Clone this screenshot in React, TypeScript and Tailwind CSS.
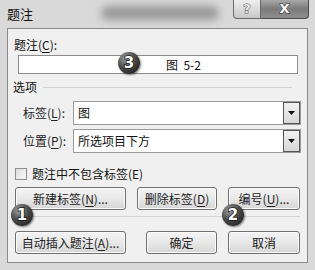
import React from 'react';

const font = { fontFamily: '"Noto Sans CJK SC", "Noto Sans", sans-serif' };

function Badge({ n }: { n: string }) {
  return (
    <div className="w-[22px] h-[22px] rounded-full flex items-center justify-center bg-[radial-gradient(circle_at_35%_30%,#a0a0a0_0%,#4a4a4a_45%,#111_100%)] shadow-[1px_1px_2px_rgba(0,0,0,0.5)]">
      <span
        className="text-[15px] font-black leading-none text-white [-webkit-text-stroke:1.5px_#111] [paint-order:stroke_fill]"
        style={{ fontFamily: '"DejaVu Sans", sans-serif' }}
      >
        {n}
      </span>
    </div>
  );
}

function Button({ label, u, rest, w, ml }: { label: string; u?: string; rest?: string; w: string; ml: string }) {
  return (
    <div
      className={`${w} ${ml} h-[23px] rounded-[3px] border border-[#707070] bg-gradient-to-b from-[#f4f4f4] via-[#e8e8e8] to-[#d6d6d6] shadow-[inset_0_0_0_1px_#fbfbfb] flex items-center justify-center text-[12px] text-[#222]`}
    >
      {label}
      {u && (
        <>
          (<span className="underline underline-offset-2">{u}</span>){rest}
        </>
      )}
    </div>
  );
}

function Combo({ value }: { value: string }) {
  return (
    <div className="ml-[5px] w-[228px] h-[24px] border border-[#9a9a9a] bg-white flex items-center">
      <span className="flex-1 pl-[4px] text-[12px] text-[#111]">{value}</span>
      <div className="w-[17px] h-[22px] border border-[#555] bg-gradient-to-b from-[#f2f2f2] to-[#d8d8d8] flex items-center justify-center">
        <svg width="7" height="4" viewBox="0 0 7 4">
          <path d="M0 0h7L3.5 4z" fill="#111" />
        </svg>
      </div>
    </div>
  );
}

export default function App() {
  return (
    <div className="w-[315px] h-[270px] bg-[#d9d9d9] overflow-hidden" style={font}>
      {/* title bar */}
      <div className="h-[28px] flex items-start">
        <span className="mt-[6px] ml-[7px] text-[13px] text-[#111] leading-[16px]">题注</span>
        <div className="mt-[6px] ml-[68px] w-[118px] h-[14px] bg-[#6e6e6e] blur-[4px] opacity-60 rounded-full" />
        <div className="ml-auto flex">
          <div className="w-[28px] h-[19px] rounded-bl-[4px] border border-t-0 border-[#6a6a6a] bg-gradient-to-b from-[#eeeeee] to-[#c8c8c8] flex items-center justify-center text-[13px] font-bold text-[#e8e8e8] [-webkit-text-stroke:1px_#555] [paint-order:stroke_fill]" style={{ fontFamily: '"DejaVu Sans", sans-serif' }}>
            ?
          </div>
          <div className="w-[48px] h-[19px] rounded-br-[4px] border border-t-0 border-l-0 border-[#4a4a4a] bg-gradient-to-b from-[#a8a8a8] via-[#7a7a7a] to-[#8e8e8e] flex items-center justify-center text-[13px] font-bold text-white [-webkit-text-stroke:1px_#333] [paint-order:stroke_fill]" style={{ fontFamily: '"DejaVu Sans", sans-serif' }}>
            X
          </div>
          <div className="w-[6px]" />
        </div>
      </div>

      {/* panel */}
      <div className="ml-[7px] w-[301px] h-[235px] border border-[#8a8a8a] bg-[#f0f0f0] relative flex flex-col">
        <span className="mt-[8px] ml-[6px] text-[12px] leading-[16px] text-[#111]">
          题注(<span className="underline underline-offset-2">C</span>):
        </span>
        <div className="mt-[2px] ml-[10px] w-[280px] h-[19px] border border-[#8c8c8c] bg-white flex items-center">
          <span className="ml-[147px] text-[12px] text-[#111]">图&nbsp;&nbsp;5-2</span>
        </div>

        <div className="mt-[5px] ml-[5px] flex items-center">
          <span className="text-[12px] leading-[16px] text-[#111]">选项</span>
          <div className="ml-[6px] w-[249px] h-px bg-[#d2d2d2]" />
        </div>

        <div className="mt-[6px] ml-[15px] flex items-center">
          <span className="w-[45px] text-[12px] text-[#222]">
            标签(<span className="underline underline-offset-2">L</span>):
          </span>
          <Combo value="图" />
        </div>
        <div className="mt-[4px] ml-[15px] flex items-center">
          <span className="w-[45px] text-[12px] text-[#222]">
            位置(<span className="underline underline-offset-2">P</span>):
          </span>
          <Combo value="所选项目下方" />
        </div>

        <div className="mt-[14px] ml-[7px] flex items-center">
          <div className="w-[12px] h-[12px] border border-[#8e8e8e] bg-gradient-to-br from-[#dcdcdc] to-[#fafafa]" />
          <span className="ml-[5px] text-[12px] leading-[14px] text-[#111]">题注中不包含标签(E)</span>
        </div>

        <div className="mt-[6px] flex">
          <Button label="新建标签" u="N" rest="..." w="w-[111px]" ml="ml-[7px]" />
          <Button label="删除标签" u="D" w="w-[80px]" ml="ml-[11px]" />
          <Button label="编号" u="U" rest="..." w="w-[72px]" ml="ml-[11px]" />
        </div>

        <div className="mt-[6px] ml-[7px] w-[285px] h-px bg-[#d4d4d4]" />

        <div className="mt-[14px] flex">
          <Button label="自动插入题注" u="A" rest="..." w="w-[111px]" ml="ml-[7px]" />
          <Button label="确定" w="w-[71px]" ml="ml-[20px]" />
          <Button label="取消" w="w-[72px]" ml="ml-[11px]" />
        </div>

        <div className="absolute left-[110px] top-[23px]">
          <Badge n="3" />
        </div>
        <div className="absolute left-[3px] top-[175px]">
          <Badge n="1" />
        </div>
        <div className="absolute left-[214px] top-[175px]">
          <Badge n="2" />
        </div>
      </div>
    </div>
  );
}
